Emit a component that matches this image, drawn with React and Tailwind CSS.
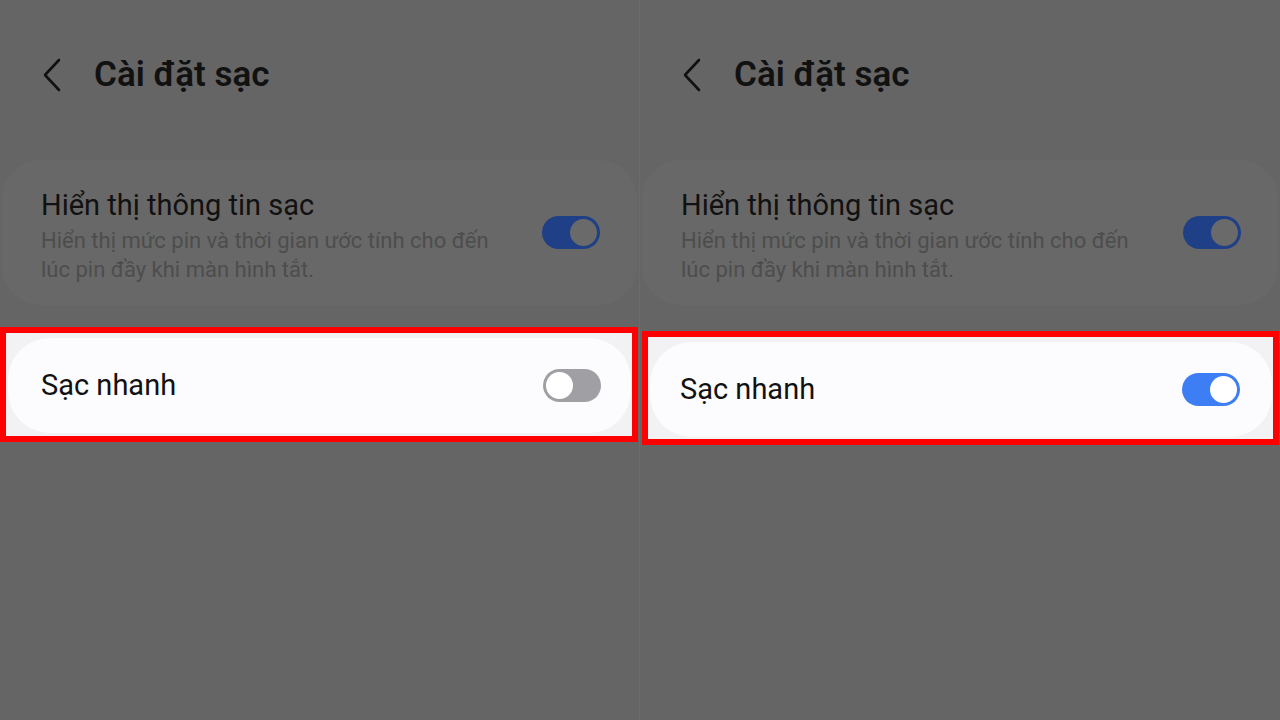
import React from "react";

function Toggle({ state }) {
  // state: "dim" (dimmed on), "off", "on"
  if (state === "off") {
    return (
      <div className="w-[58px] h-[33px] rounded-full bg-[#a0a0a4] flex items-center justify-start px-[3px] shrink-0">
        <div className="w-[27px] h-[27px] rounded-full bg-white" />
      </div>
    );
  }
  const track = state === "on" ? "bg-[#3e7ef4]" : "bg-[#1f3f86]";
  const knob = state === "on" ? "bg-white" : "bg-[#6a6a6a]";
  return (
    <div className={`w-[58px] h-[33px] rounded-full ${track} flex items-center justify-end px-[3px] shrink-0`}>
      <div className={`w-[27px] h-[27px] rounded-full ${knob}`} />
    </div>
  );
}

function Panel({ fastOn, boxClass, innerPad, divider }) {
  return (
    <div className={`w-[640px] h-[720px] flex flex-col ${divider ? "border-r border-[#6b6b6b]" : ""}`}>
      {/* header */}
      <div className="mt-[52px] h-[46px] flex items-center pl-[42px]">
        <svg width="20" height="34" viewBox="0 0 20 34" fill="none">
          <polyline points="17,2 3,17 17,32" stroke="#111" strokeWidth="2.6" strokeLinecap="round" strokeLinejoin="round" />
        </svg>
        <h1 className="ml-[32px] text-[35px] font-semibold text-[#111]">Cài đặt sạc</h1>
      </div>

      {/* charging info card (dimmed) */}
      <div className="mt-[62px] mx-[2px] h-[145px] rounded-[38px] bg-[#686868] flex items-center pl-[39px] pr-[37px]">
        <div className="flex-1 pt-[6px]">
          <div className="text-[29px] leading-[34px] text-[#111]">Hiển thị thông tin sạc</div>
          <div className="mt-[4px] text-[22px] leading-[29px] text-[#4d4d4d]">
            Hiển thị mức pin và thời gian ước tính cho đến
            <br />
            lúc pin đầy khi màn hình tắt.
          </div>
        </div>
        <Toggle state="dim" />
      </div>

      {/* highlighted fast charge */}
      <div className={`border-[6px] border-[#ff0000] bg-[#f2f2f4] ${boxClass}`}>
        <div className={`h-[95px] rounded-[42px] bg-[#fcfcfe] flex items-center ${innerPad}`}>
          <div className="flex-1 text-[29px] text-[#111]">Sạc nhanh</div>
          <Toggle state={fastOn ? "on" : "off"} />
        </div>
      </div>
    </div>
  );
}

export default function App() {
  return (
    <div className="w-[1280px] h-[720px] bg-[#656565] flex overflow-hidden" style={{ fontFamily: "Roboto, 'Noto Sans', sans-serif" }}>
      <Panel fastOn={false} divider innerPad="pl-[33px] pr-[30px]" boxClass="mt-[22px] ml-[0px] mr-[1px] pt-[5px] pb-[3px] pl-[2px] pr-[1px]" />
      <Panel fastOn innerPad="pl-[30px] pr-[32px]" boxClass="mt-[26px] ml-[2px] mr-[1px] pt-[5px] pb-[2px] pl-[2px] pr-[1px]" />
    </div>
  );
}
